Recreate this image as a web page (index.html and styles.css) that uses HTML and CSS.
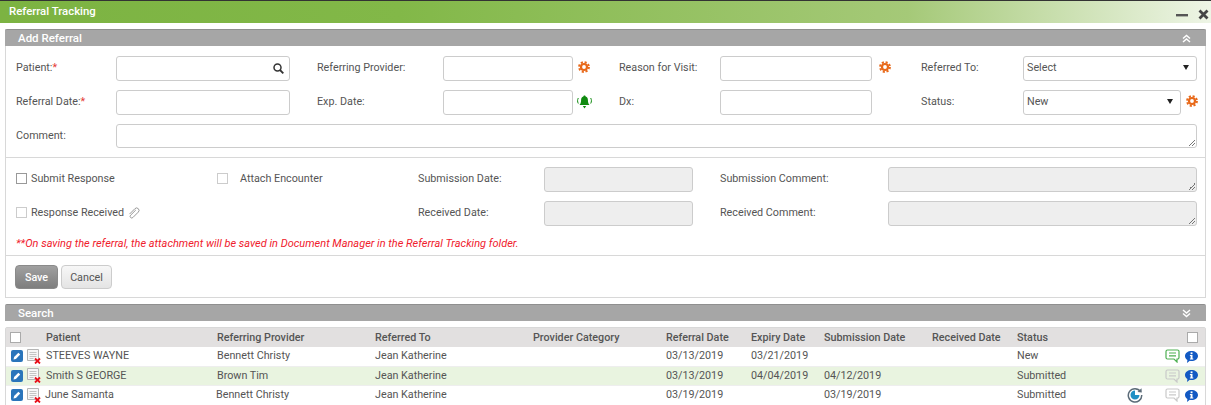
FILE: index.html
```html
<!DOCTYPE html>
<html lang="en">
<head>
    <meta charset="UTF-8">
    <title>Referral Tracking</title>
    <link rel="stylesheet" href="styles.css">
</head>
<body>
    <svg class="defs" width="0" height="0">
        <symbol id="gear" viewBox="0 0 12 12">
            <circle cx="6" cy="6" r="3" fill="none" stroke="#e8691a" stroke-width="2.2"/>
            <circle cx="6" cy="6" r="4.900" fill="none" stroke="#e8691a" stroke-width="2" stroke-dasharray="2.100 1.750"/>
        </symbol>
        <symbol id="edit" viewBox="0 0 12 12">
            <rect width="12" height="12" rx="2" fill="#2a75bb"/>
            <path d="M2.5 9.5l.6-2.4 4.3-4.3 1.8 1.8-4.3 4.3z" fill="#fff"/>
        </symbol>
        <symbol id="note-x" viewBox="0 0 14 15">
            <path d="M.5.5h11v11H.5z" fill="#f7f7f7" stroke="#b5b5b5"/>
            <path d="M2.500 3.500h7M2.500 5.500h7M2.500 7.500h7M2.500 9.500h4" stroke="#c4c4c4"/>
            <path d="M8 9.500l5 5M13 9.500l-5 5" stroke="#e8101a" stroke-width="1.800"/>
        </symbol>
        <symbol id="comment" viewBox="0 0 15 14">
            <path d="M2.5 1h10A1.5 1.5 0 0 1 14 2.500v6a1.500 1.500 0 0 1-1.500 1.500H12v3l-3-3H2.500A1.500 1.500 0 0 1 1 8.500v-6A1.500 1.500 0 0 1 2.500 1z" fill="none" stroke="currentColor" stroke-width="1.200"/>
            <path d="M4 4h7M4 6.800h7" stroke="currentColor" stroke-width="1.200"/>
        </symbol>
        <symbol id="info" viewBox="0 0 13 13">
            <path d="M6.500 1C10 1 13 3 13 6s-3 5-6.500 5c-.6 0-1.200 0-1.700-.2L2 13l.4-3.100C.9 9 0 7.600 0 6c0-3 3-5 6.500-5z" fill="#1259c3"/>
            <rect x="5.600" y="2.400" width="1.900" height="1.800" fill="#fff"/>
            <path d="M4.900 5h2.600v3.600h.8v1H4.900v-1h.7V6h-.7z" fill="#fff"/>
        </symbol>
    </svg>

    <header class="title-bar">
        <span>Referral Tracking</span>
        <div class="win-btns">
            <svg width="12" height="11" viewBox="0 0 12 11"><path d="M0 5h12v2.400H0z" fill="#555"/></svg>
            <svg width="11" height="11" viewBox="0 0 11 11"><path d="M1.500 1.500l8 8M9.500 1.500l-8 8" stroke="#444" stroke-width="2.800"/></svg>
        </div>
    </header>

    <section class="panel add-panel">
        <div class="panel-head">
            <span>Add Referral</span>
            <svg width="9" height="9" viewBox="0 0 9 9"><path d="M1 4.500l3.500-3 3.500 3M1 8l3.500-3 3.500 3" fill="none" stroke="#fff" stroke-width="1.500"/></svg>
        </div>

        <div class="form-top">
            <label class="lbl">Patient:<b>*</b></label>
            <div class="field search-field">
                <svg width="11" height="11" viewBox="0 0 11 11"><circle cx="4.500" cy="4.500" r="3.500" fill="none" stroke="#333" stroke-width="1.500"/><path d="M7 7l3.300 3.300" stroke="#333" stroke-width="1.800"/></svg>
            </div>
            <label class="lbl gap-left">Referring Provider:</label>
            <div class="field"></div>
            <svg class="side-icon"><use href="#gear"/></svg>
            <label class="lbl">Reason for Visit:</label>
            <div class="field"></div>
            <svg class="side-icon wide"><use href="#gear"/></svg>
            <label class="lbl">Referred To:</label>
            <div class="field select-field span-2"><span>Select</span><i class="caret"></i></div>

            <label class="lbl">Referral Date:<b>*</b></label>
            <div class="field"></div>
            <label class="lbl gap-left">Exp. Date:</label>
            <div class="field"></div>
            <svg class="side-icon bell" viewBox="0 0 15 14">
                <path d="M7.500 .5c.7 0 1 .4 1.100 1 1.600.4 2.300 1.700 2.300 3.500 0 2.800.8 4 1.600 5H2.500c.8-1 1.600-2.200 1.600-5 0-1.800.7-3.100 2.300-3.500.1-.6.400-1 1.100-1z" fill="#0f8a0f"/>
                <path d="M5.800 11h3.400l-1.700 2.500z" fill="#0f8a0f"/>
                <path d="M1.300 3c-1 2-1 3.500 0 5.500M13.700 3c1 2 1 3.500 0 5.500" fill="none" stroke="#0f8a0f"/>
            </svg>
            <label class="lbl">Dx:</label>
            <div class="field"></div>
            <span></span>
            <label class="lbl">Status:</label>
            <div class="field select-field"><span>New</span><i class="caret"></i></div>
            <svg class="side-icon"><use href="#gear"/></svg>

            <label class="lbl">Comment:</label>
            <div class="field comment-field resize"></div>
        </div>

        <div class="form-mid">
            <label class="check-cell"><i class="box dark"></i>Submit Response</label>
            <label class="check-cell attach"><i class="box"></i>Attach Encounter</label>
            <label class="lbl">Submission Date:</label>
            <div class="field off"></div>
            <label class="lbl gap-left">Submission Comment:</label>
            <div class="field off resize"></div>

            <label class="check-cell"><i class="box"></i>Response Received
                <svg class="clip" width="12" height="12" viewBox="0 0 12 12"><path d="M7.500 2L2.300 7.200a1.600 1.600 0 0 0 2.300 2.300L10 4.100a2.400 2.400 0 0 0-3.400-3.400L1.200 6.100" transform="translate(.3 1)" fill="none" stroke="#999"/></svg>
            </label>
            <span></span>
            <label class="lbl">Received Date:</label>
            <div class="field off"></div>
            <label class="lbl gap-left">Received Comment:</label>
            <div class="field off resize"></div>

            <p class="note">**On saving the referral, the attachment will be saved in Document Manager in the Referral Tracking folder.</p>
        </div>

        <div class="form-btns">
            <button class="btn btn-save">Save</button>
            <button class="btn">Cancel</button>
        </div>
    </section>

    <section class="panel-search">
        <div class="panel-head">
            <span>Search</span>
            <svg width="9" height="9" viewBox="0 0 9 9"><path d="M1 1l3.500 3 3.500-3M1 4.500l3.500 3 3.500-3" fill="none" stroke="#fff" stroke-width="1.500"/></svg>
        </div>

        <div class="grid-table">
            <div class="tr th">
                <i class="box white"></i><span></span>
                <span>Patient</span><span>Referring Provider</span><span>Referred To</span><span>Provider Category</span>
                <span>Referral Date</span><span>Expiry Date</span><span>Submission Date</span><span>Received Date</span><span>Status</span>
                <span></span><i class="box white"></i>
            </div>
            <div class="tr">
                <svg class="ic-edit"><use href="#edit"/></svg><svg class="ic-note"><use href="#note-x"/></svg>
                <span>STEEVES WAYNE</span><span>Bennett Christy</span><span>Jean Katherine</span><span></span>
                <span>03/13/2019</span><span>03/21/2019</span><span></span><span></span><span>New</span>
                <span></span>
                <div class="row-icons"><svg class="ic-comment on"><use href="#comment"/></svg><svg class="ic-info"><use href="#info"/></svg></div>
            </div>
            <div class="tr green">
                <svg class="ic-edit"><use href="#edit"/></svg><svg class="ic-note"><use href="#note-x"/></svg>
                <span>Smith S GEORGE</span><span>Brown Tim</span><span>Jean Katherine</span><span></span>
                <span>03/13/2019</span><span>04/04/2019</span><span>04/12/2019</span><span></span><span>Submitted</span>
                <span></span>
                <div class="row-icons"><svg class="ic-comment"><use href="#comment"/></svg><svg class="ic-info"><use href="#info"/></svg></div>
            </div>
            <div class="tr last">
                <svg class="ic-edit"><use href="#edit"/></svg><svg class="ic-note"><use href="#note-x"/></svg>
                <span>June Samanta</span><span>Bennett Christy</span><span>Jean Katherine</span><span></span>
                <span>03/19/2019</span><span></span><span>03/19/2019</span><span></span><span>Submitted</span>
                <svg class="ic-refresh" width="16" height="16" viewBox="0 0 16 16">
                    <path d="M13.500 4.500A6.700 6.700 0 1 0 14.700 8" fill="none" stroke="#5b6b78" stroke-width="1.500"/>
                    <path d="M10.500 5l4.300.5-.3-4.300z" fill="#5b6b78"/>
                    <path d="M8 3.500V8h4.500A4.500 4.500 0 1 1 8 3.500z" fill="#1f8fc4"/>
                </svg>
                <div class="row-icons"><svg class="ic-comment"><use href="#comment"/></svg><svg class="ic-info"><use href="#info"/></svg></div>
            </div>
        </div>
    </section>
</body>
</html>
```

FILE: styles.css
```css
* {
    box-sizing: border-box;
}
body {
    margin: 0;
    height: 405px;
    overflow: hidden;
    background: #fff;
    font-family: Roboto, "Liberation Sans", sans-serif;
    font-size: 10.75px;
    color: #555;
}
.defs {
    position: absolute;
}
.title-bar {
    height: 23px;
    display: flex;
    align-items: center;
    justify-content: space-between;
    padding: 0 2px 2px 9px;
    border-top: 1px solid #333;
    background: linear-gradient(to right, #7cb342 0%, #82b848 33%, #a5c978 75%, #eef5e6 100%);
    color: #fff;
    font-size: 11.4px;
    font-weight: 500;
}
.win-btns {
    display: flex;
    gap: 10px;
    padding-top: 7px;
}
.panel {
    margin: 6px 5px 0;
    border: 1px solid #d8d8d8;
    border-top: 0;
    height: 269px;
}
.panel-search {
    margin: 6px 5px 0;
}
.panel-head {
    height: 17px;
    display: flex;
    align-items: center;
    justify-content: space-between;
    padding: 0 15px 0 13px;
    background: #a6a6a6;
    border-top: 1px solid #8f8f8f;
    border-radius: 2px 2px 0 0;
    color: #fff;
    font-size: 11.5px;
    font-weight: 500;
}
.add-panel .panel-head {
    margin: 0 -1px;
}
.form-top {
    display: grid;
    grid-template-columns: 100px 174px 153px 130px 46px 101px 152px 49px 102px 158px 16px;
    grid-template-rows: 25px 25px 24px;
    row-gap: 9px;
    align-items: center;
    padding: 10px 0 9px 10px;
    border-bottom: 1px solid #d8d8d8;
}
.lbl {
    white-space: nowrap;
    margin-bottom: 2px;
}
.gap-left {
    margin-left: 27px;
}
.lbl b {
    color: #e53935;
    font-weight: 400;
}
.field {
    height: 100%;
    background: #fff;
    border: 1px solid #ccc;
    border-radius: 3px;
    position: relative;
}
.search-field {
    display: flex;
    align-items: center;
    justify-content: flex-end;
    padding-right: 5px;
}
.select-field {
    display: flex;
    align-items: center;
    justify-content: space-between;
    padding: 0 7px 2px 3px;
}
.span-2 {
    grid-column: span 2;
}
.caret {
    width: 0;
    height: 0;
    border: 3px solid transparent;
    border-top: 5px solid #222;
    border-bottom: 0;
}
.side-icon {
    width: 12px;
    height: 12px;
    margin: 0 0 3px 5px;
}
.side-icon.wide {
    margin-left: 7px;
}
.side-icon.bell {
    width: 15px;
    height: 14px;
    margin: 0 0 2px 4px;
}
.comment-field {
    grid-column: 2 / -1;
}
.resize::after {
    content: "";
    position: absolute;
    right: 1px;
    bottom: 1px;
    width: 7px;
    height: 7px;
    background: linear-gradient(135deg, transparent 50%, #777 50%, #777 58%, transparent 58%, transparent 75%, #777 75%, #777 83%, transparent 83%);
}
.form-mid {
    display: grid;
    grid-template-columns: 201px 201px 126px 149px 195px 309px;
    grid-template-rows: 25px 25px;
    row-gap: 9px;
    align-items: center;
    padding: 9px 0 0 10px;
    height: 98px;
    border-bottom: 1px solid #d8d8d8;
}
.check-cell {
    display: flex;
    align-items: center;
    white-space: nowrap;
    margin-bottom: 2px;
}
.attach .box {
    margin-right: 12px;
}
.box {
    flex: none;
    display: block;
    width: 11px;
    height: 11px;
    margin-right: 4px;
    background: #fff;
    border: 1px solid #ccc;
}
.box.dark {
    border-color: #999;
}
.box.white {
    margin: 0;
    border-color: #aaa;
}
.clip {
    margin-left: 4px;
}
.off {
    background: #eee;
}
.note {
    grid-column: 1 / -1;
    margin: -3px 0 0;
    color: #f0202c;
    font-size: 11px;
    font-style: italic;
}
.form-btns {
    display: flex;
    gap: 3px;
    padding: 9px 0 0 9px;
}
.btn {
    height: 24px;
    width: 51px;
    padding: 0;
    background: linear-gradient(#f7f7f7, #e4e4e4);
    border: 1px solid #ccc;
    border-radius: 4px;
    font: inherit;
    color: #555;
}
.btn-save {
    width: 43px;
    background: linear-gradient(#a0a0a0, #7e7e7e);
    border-color: #8a8a8a;
    color: #fff;
    font-weight: 500;
}
.grid-table {
    margin-top: 6px;
    border: 1px solid #d8d8d8;
    border-radius: 2px 2px 0 0;
}
.tr {
    display: grid;
    grid-template-columns: 17px 18px 171px 158px 158px 133px 85px 73px 108px 85px 110px 16px 1fr;
    align-items: center;
    height: 19.5px;
    padding-left: 5px;
    border-bottom: 1px solid #eee;
    white-space: nowrap;
}
.tr span {
    margin-bottom: 1px;
}
.th {
    height: 19px;
    background: #e2e0e0;
    font-weight: 500;
    border-bottom: 0;
}
.th > .box:first-child {
    margin-left: -1px;
}
.th > .box:last-child {
    justify-self: end;
    margin-right: 7px;
}
.green {
    background: #e9f4e0;
}
.last {
    border-bottom: 1px solid #ddd;
}
.ic-edit {
    width: 12px;
    height: 12px;
}
.ic-note {
    width: 14px;
    height: 15px;
    margin-left: -1px;
}
.last span:nth-of-type(1),
.last span:nth-of-type(2) {
    margin-left: -1px;
}
.row-icons {
    display: flex;
    gap: 5px;
    align-items: center;
    justify-content: flex-end;
    padding-right: 7px;
}
.ic-comment {
    width: 15px;
    height: 14px;
    color: #c9c9c9;
}
.ic-comment.on {
    color: #4caf50;
}
.ic-info {
    width: 13px;
    height: 13px;
}
```
